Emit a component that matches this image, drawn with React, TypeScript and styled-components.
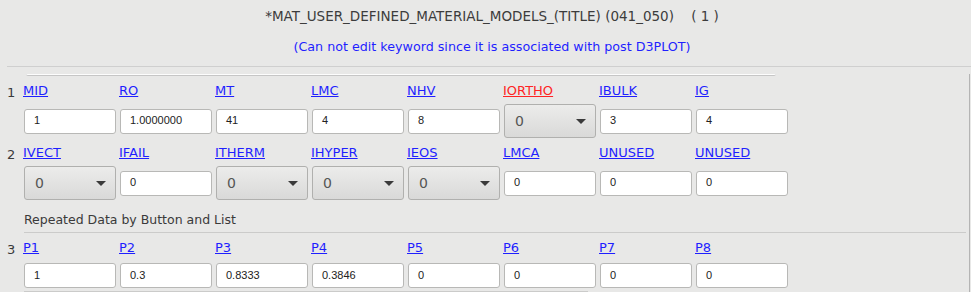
import React from "react";
import styled, { createGlobalStyle } from "styled-components";

// style
const GlobalStyle = createGlobalStyle`
  html, body {
    margin: 0;
    padding: 0;
    background: #e8e8e7;
  }
  body {
    font-family: "DejaVu Sans", "Liberation Sans", sans-serif;
    width: 971px;
    height: 292px;
    overflow: hidden;
  }
`;

const Page = styled.div`
  width: 971px;
  height: 292px;
  display: flex;
  flex-direction: column;
`;

const Title = styled.div`
  height: 32px;
  display: flex;
  align-items: center;
  justify-content: center;
  padding-left: 13px;
  font-size: 13.5px;
  color: #3c3c3c;
  white-space: pre;
`;

const Notice = styled.div`
  height: 28px;
  display: flex;
  align-items: center;
  justify-content: center;
  padding-left: 13px;
  font-size: 12.7px;
  color: #1f1fff;
`;

const Panel = styled.div`
  margin-top: 6px;
  margin-left: 7px;
  border-top: 1px solid #cfcfcf;
  padding-top: 7px;
  flex: 1;
  display: flex;
`;

const Content = styled.div`
  width: 962px;
  border-right: 1px solid #b4b4b4;
  display: flex;
  flex-direction: column;
`;

const ScrollEdge = styled.div`
  margin-left: 19px;
  width: 750px;
  height: 1px;
  background: #fdfdfd;
  border-bottom: 1px solid #c6c6c6;
  border-radius: 0 0 2px 2px;
`;

const Row = styled.div<{ $top: number; $field: number }>`
  margin-top: ${(p) => p.$top}px;
  display: grid;
  grid-template-columns: 13px repeat(8, 92px);
  grid-template-rows: 18px ${(p) => p.$field}px;
  column-gap: 4px;
  row-gap: 4px;
  align-items: center;
`;

const RowNum = styled.div`
  grid-row: 1;
  font-size: 13px;
  color: #3a3a3a;
  padding-top: 2px;
`;

const Label = styled.a<{ $red?: boolean }>`
  grid-row: 1;
  margin-left: -1px;
  font-size: 13px;
  line-height: 18px;
  color: ${(p) => (p.$red ? "#ff2424" : "#1f1fff")};
  text-decoration: underline;
  cursor: pointer;
`;

const Input = styled.div`
  grid-row: 2;
  height: 25px;
  box-sizing: border-box;
  background: #fff;
  border: 1px solid #b8b8b6;
  border-radius: 3px;
  padding: 0 0 2px 9px;
  display: flex;
  align-items: center;
  font-family: "Liberation Sans", Arial, sans-serif;
  font-size: 11px;
  color: #222;
`;

const Select = styled.div`
  grid-row: 2;
  height: 34px;
  box-sizing: border-box;
  background: linear-gradient(#ececeb, #d9d9d8);
  border: 1px solid #b0b0ae;
  border-radius: 3px;
  padding: 0 9px 0 10px;
  display: flex;
  align-items: center;
  justify-content: space-between;
  font-size: 14px;
  color: #555;
`;

const Arrow = styled.span`
  width: 0;
  height: 0;
  border-left: 5px solid transparent;
  border-right: 5px solid transparent;
  border-top: 5px solid #3a3a3a;
`;

const Section = styled.div`
  margin-top: 10px;
  margin-left: 17px;
  height: 19px;
  display: flex;
  align-items: center;
  font-size: 12.5px;
  color: #3a3a3a;
`;

const Divider = styled.div<{ $width: number }>`
  margin-left: 17px;
  width: ${(p) => p.$width}px;
  height: 1px;
  background: #cbcbca;
`;

type Field = { name: string; value: string; select?: boolean; red?: boolean };

const rows: Field[][] = [
  [
    { name: "MID", value: "1" },
    { name: "RO", value: "1.0000000" },
    { name: "MT", value: "41" },
    { name: "LMC", value: "4" },
    { name: "NHV", value: "8" },
    { name: "IORTHO", value: "0", select: true, red: true },
    { name: "IBULK", value: "3" },
    { name: "IG", value: "4" },
  ],
  [
    { name: "IVECT", value: "0", select: true },
    { name: "IFAIL", value: "0" },
    { name: "ITHERM", value: "0", select: true },
    { name: "IHYPER", value: "0", select: true },
    { name: "IEOS", value: "0", select: true },
    { name: "LMCA", value: "0" },
    { name: "UNUSED", value: "0" },
    { name: "UNUSED", value: "0" },
  ],
  [
    { name: "P1", value: "1" },
    { name: "P2", value: "0.3" },
    { name: "P3", value: "0.8333" },
    { name: "P4", value: "0.3846" },
    { name: "P5", value: "0" },
    { name: "P6", value: "0" },
    { name: "P7", value: "0" },
    { name: "P8", value: "0" },
  ],
];

const CardRow = ({ num, fields, top, field }: { num: number; fields: Field[]; top: number; field: number }) => (
  <Row $top={top} $field={field}>
    <RowNum>{num}</RowNum>
    {fields.map((f, i) => (
      <Label key={"l" + i} $red={f.red} style={{ gridColumn: i + 2 }}>
        {f.name}
      </Label>
    ))}
    {fields.map((f, i) =>
      f.select ? (
        <Select key={"f" + i} style={{ gridColumn: i + 2 }}>
          {f.value}
          <Arrow />
        </Select>
      ) : (
        <Input key={"f" + i} style={{ gridColumn: i + 2 }}>
          {f.value}
        </Input>
      )
    )}
  </Row>
);

const App = () => {
  return (
    <Page>
      <GlobalStyle />
      <Title>{"*MAT_USER_DEFINED_MATERIAL_MODELS_(TITLE) (041_050)    ( 1 )"}</Title>
      <Notice>(Can not edit keyword since it is associated with post D3PLOT)</Notice>
      <Panel>
        <Content>
          <ScrollEdge />
          <CardRow num={1} fields={rows[0]} top={6} field={34} />
          <CardRow num={2} fields={rows[1]} top={6} field={34} />
          <Section>Repeated Data by Button and List</Section>
          <Divider $width={942} style={{ marginTop: 3 }} />
          <CardRow num={3} fields={rows[2]} top={6} field={29} />
          <Divider $width={564} style={{ marginTop: 1 }} />
        </Content>
      </Panel>
    </Page>
  );
};

export default App;
